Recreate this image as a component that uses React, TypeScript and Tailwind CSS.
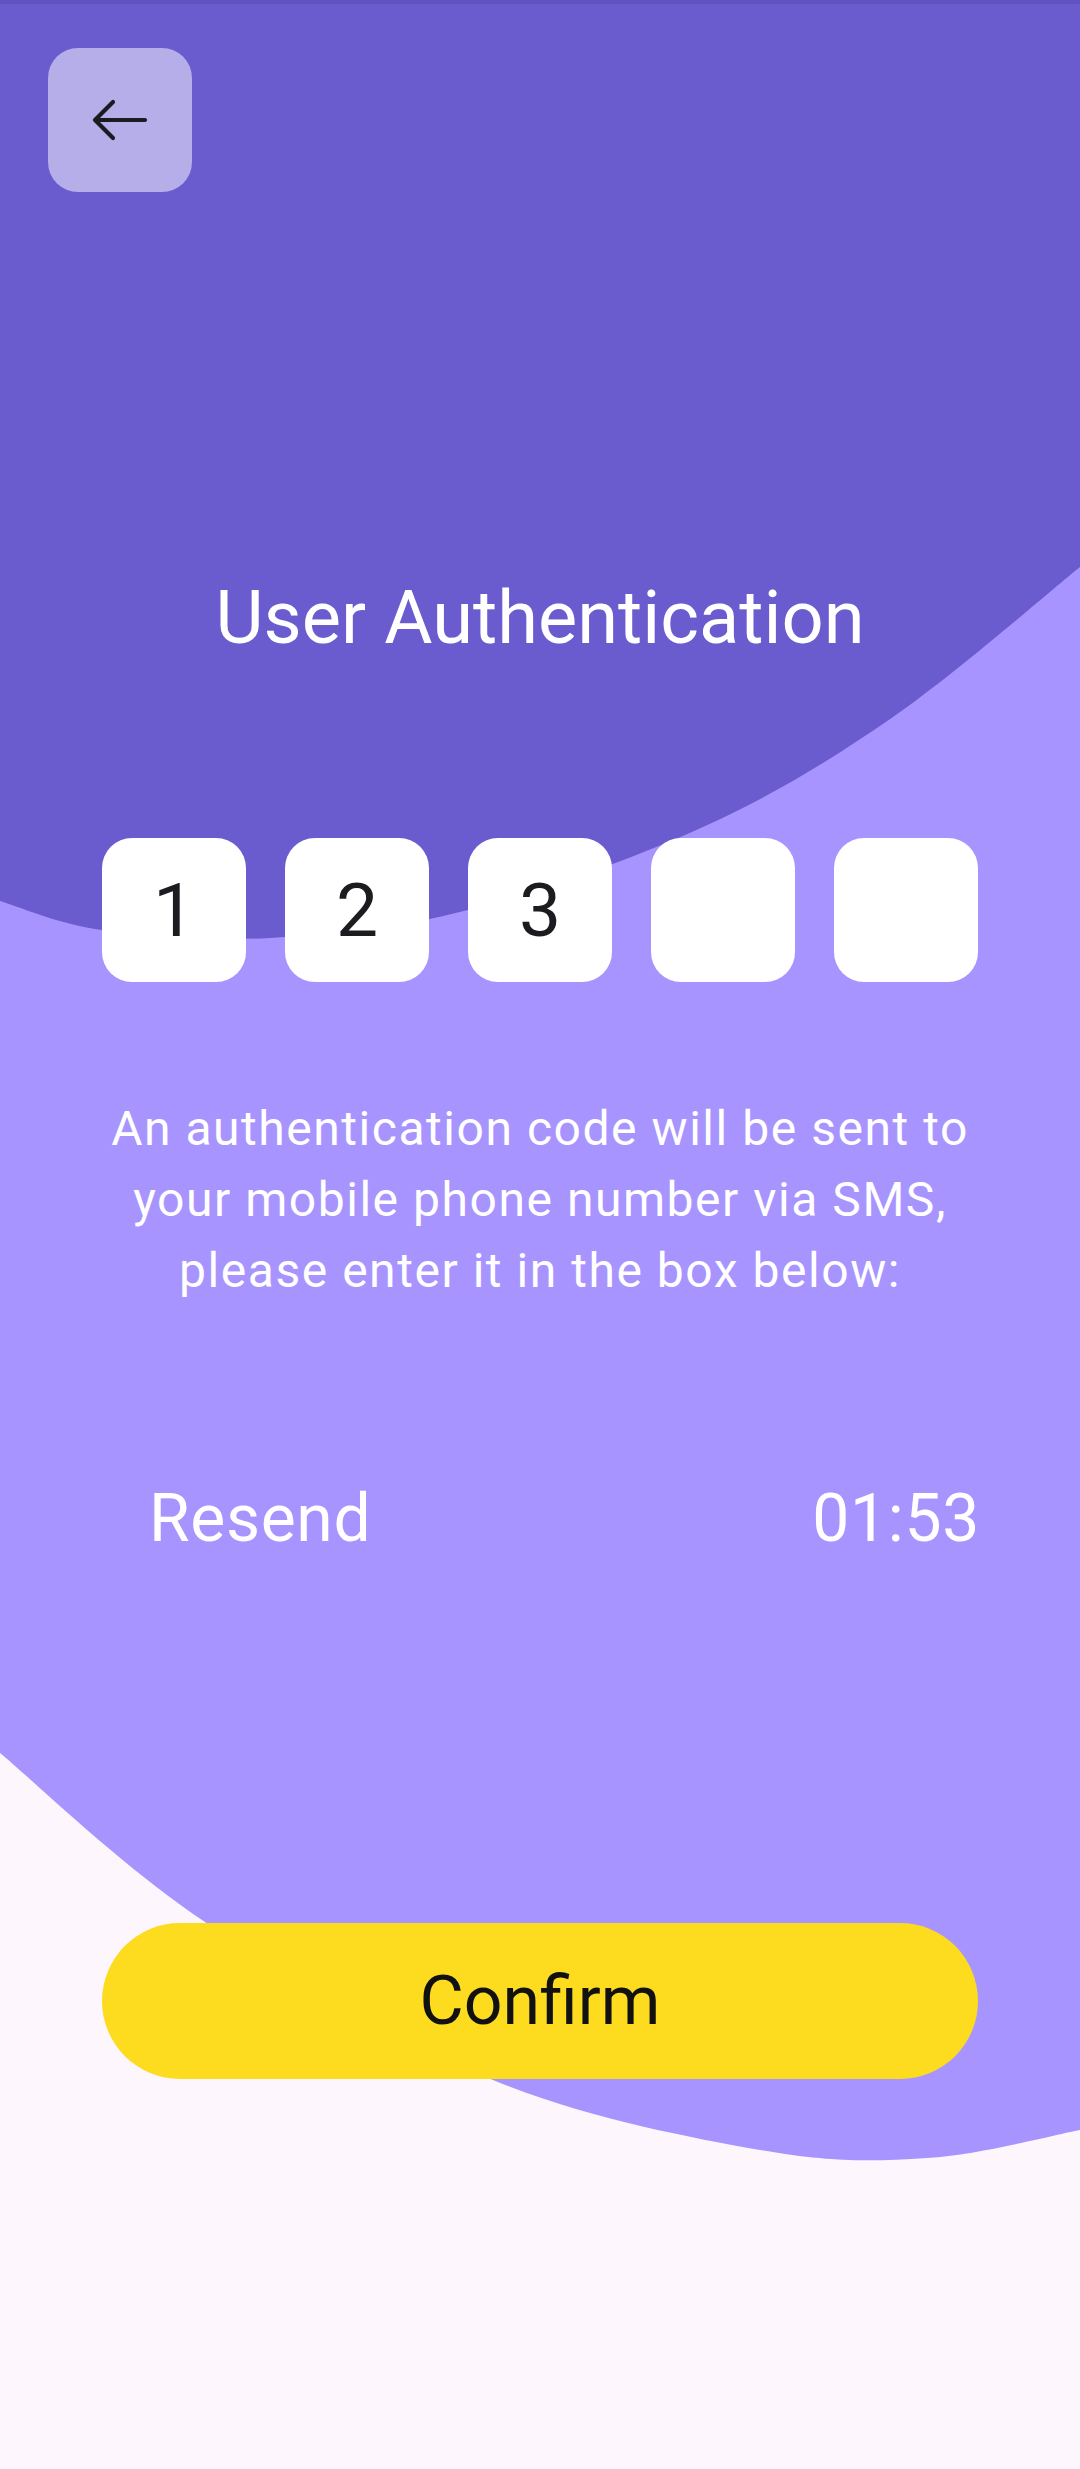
import React from "react";

type Pt = [number, number];

// dark top shape: right edge down to the left edge, read off the reference
const DARK_EDGE: Pt[] = [
  [1080, 567], [893, 717], [703, 827], [468, 910], [270, 938], [102, 930], [0, 901],
];

// light purple shape: right edge back to the left edge
const LIGHT_EDGE: Pt[] = [
  [1080, 2130], [927, 2158], [760, 2150], [493, 2080], [205, 1922], [0, 1753],
];

function smoothPath(pts: Pt[]) {
  let d = "";
  for (let i = 0; i < pts.length - 1; i++) {
    const p0 = pts[i - 1] ?? pts[i];
    const p1 = pts[i];
    const p2 = pts[i + 1];
    const p3 = pts[i + 2] ?? p2;
    const c1x = p1[0] + (p2[0] - p0[0]) / 6;
    const c1y = p1[1] + (p2[1] - p0[1]) / 6;
    const c2x = p2[0] - (p3[0] - p1[0]) / 6;
    const c2y = p2[1] - (p3[1] - p1[1]) / 6;
    d += ` C${c1x},${c1y} ${c2x},${c2y} ${p2[0]},${p2[1]}`;
  }
  return d;
}

const DARK_D = `M0,0 L1080,0 L1080,567${smoothPath(DARK_EDGE)} Z`;
const LIGHT_D = `M0,0 L1080,0 L1080,2130${smoothPath(LIGHT_EDGE)} Z`;

const CODE = ["1", "2", "3", "", ""];

function Backdrop() {
  return (
    <svg
      className="pointer-events-none absolute inset-0"
      width="1080"
      height="2469"
      viewBox="0 0 1080 2469"
      aria-hidden
    >
      <path d={LIGHT_D} fill="#A894FE" />
      <path d={DARK_D} fill="#6A5BCE" />
      <rect x="0" y="0" width="1080" height="4" fill="#5D4FBA" opacity="0.6" />
    </svg>
  );
}

function BackButton() {
  return (
    <button className="ml-[48px] mt-[48px] flex h-[144px] w-[144px] items-center justify-center rounded-[30px] bg-[#B6AEE8]">
      <svg width="56" height="42" viewBox="0 0 56 42" fill="none">
        <path
          d="M53 21H3M21 3L3 21L21 39"
          stroke="#1C1B1F"
          strokeWidth="4.2"
          strokeLinecap="round"
          strokeLinejoin="round"
        />
      </svg>
    </button>
  );
}

export default function App() {
  return (
    <div className="relative h-[2469px] w-[1080px] overflow-hidden bg-[#FDF7FD] font-['Roboto',sans-serif]">
      <Backdrop />

      <div className="relative flex flex-col">
        <BackButton />

        <h1 className="mt-[389px] text-center text-[74px] font-normal leading-none text-white">
          User Authentication
        </h1>

        <div className="mt-[183px] flex justify-center gap-[39px]">
          {CODE.map((d, i) => (
            <div
              key={i}
              className="flex h-[144px] w-[144px] items-center justify-center rounded-[30px] bg-white text-[75px] leading-none text-[#1C1B1F]"
            >
              {d}
            </div>
          ))}
        </div>

        <p className="mt-[111px] text-center text-[48px] leading-[71px] tracking-[0.032em] text-white">
          An authentication code will be sent to
          <br />
          your mobile phone number via SMS,
          <br />
          please enter it in the box below:
        </p>

        <div className="mt-[180px] flex items-center justify-between pl-[149px] pr-[100px] text-[66px] leading-none tracking-[0.01em] text-white">
          <span>Resend</span>
          <span>01:53</span>
        </div>

        <button className="mx-[102px] mt-[371px] flex h-[156px] items-center justify-center rounded-full bg-[#FDDB1F] text-[68px] leading-none text-[#111111]">
          Confirm
        </button>
      </div>
    </div>
  );
}
